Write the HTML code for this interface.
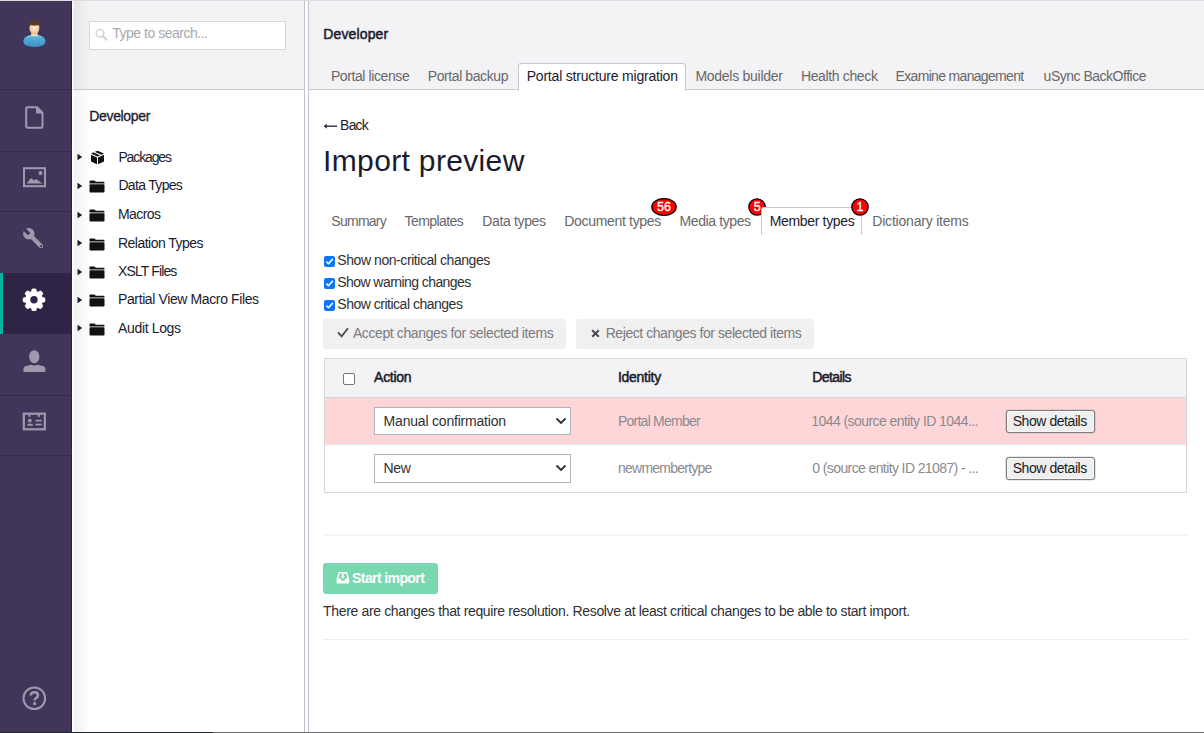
<!DOCTYPE html>
<html><head><meta charset="utf-8"><title>Import preview</title>
<style>
html,body{margin:0;padding:0;width:1204px;height:733px;overflow:hidden;background:#fff;font-family:"Liberation Sans",sans-serif}
.t{position:absolute;line-height:1;white-space:pre;font-family:"Liberation Sans",sans-serif}
</style></head><body>

<div style="position:absolute;left:0;top:0;width:1204px;height:1px;background:#dcdce0"></div>
<div style="position:absolute;left:0;top:1px;width:71px;height:732px;background:#413659"></div>
<div style="position:absolute;left:71px;top:1px;width:1px;height:732px;background:#2a2045"></div>
<div style="position:absolute;left:0;top:89px;width:71px;height:1px;background:#342a4c"></div>
<div style="position:absolute;left:0;top:151px;width:71px;height:1px;background:#342a4c"></div>
<div style="position:absolute;left:0;top:211px;width:71px;height:1px;background:#342a4c"></div>
<div style="position:absolute;left:0;top:395px;width:71px;height:1px;background:#342a4c"></div>
<div style="position:absolute;left:0;top:455px;width:71px;height:1px;background:#342a4c"></div>
<div style="position:absolute;left:0;top:273px;width:71px;height:61px;background:#2f2346"></div>
<div style="position:absolute;left:0;top:273px;width:3px;height:61px;background:#00b4a0"></div>


<!-- avatar -->
<svg style="position:absolute;left:22px;top:19px" width="26" height="30" viewBox="0 0 26 30">
 <defs>
  <radialGradient id="face" cx="50%" cy="45%" r="60%"><stop offset="0" stop-color="#fff0dc"/><stop offset="0.6" stop-color="#f6d2a8"/><stop offset="1" stop-color="#e0a874"/></radialGradient>
  <linearGradient id="body" x1="0" y1="0" x2="0" y2="1"><stop offset="0" stop-color="#9ad8f4"/><stop offset="0.25" stop-color="#55aedc"/><stop offset="1" stop-color="#3c90c6"/></linearGradient>
 </defs>
 <path d="M1.4 22.5 Q1.2 17.8 7.5 16.2 Q12.3 15.2 17.1 16.2 Q23.6 17.8 23.4 22.5 Q23.2 27.8 12.4 27.9 Q1.6 27.8 1.4 22.5Z" fill="url(#body)"/>
 <path d="M9.6 12.5 H15.2 L15.8 16.6 Q12.4 18 9 16.6Z" fill="#f7dcbc"/>
 <path d="M7.3 8.2 Q7.3 2.3 12.4 2.3 Q17.5 2.3 17.5 8.2 Q17.5 12.2 15.2 14.4 Q12.4 16.2 9.6 14.4 Q7.3 12.2 7.3 8.2Z" fill="url(#face)"/>
 <path d="M6.9 9 Q6.3 1.8 12.4 1.8 Q18.5 1.8 17.9 9 Q17.3 6.8 16.2 5.9 Q12.4 7.4 8.6 5.9 Q7.5 6.8 6.9 9Z" fill="#5e3c1f"/>
</svg>
<!-- document -->
<svg style="position:absolute;left:25px;top:106px" width="19" height="23" viewBox="0 0 19 23">
 <path d="M2.5 1.2 H12 L17.5 6.7 V20.5 Q17.5 21.8 16.2 21.8 H2.5 Q1.2 21.8 1.2 20.5 V2.5 Q1.2 1.2 2.5 1.2Z" fill="none" stroke="#a099ae" stroke-width="2"/>
 <path d="M11.5 1.5 V7 H17" fill="#a099ae" stroke="#a099ae" stroke-width="1"/>
</svg>
<!-- image -->
<svg style="position:absolute;left:23px;top:167px" width="23" height="21" viewBox="0 0 23 21">
 <rect x="1" y="1.2" width="21" height="18" fill="none" stroke="#a099ae" stroke-width="2"/>
 <path d="M3.5 16.5 L8 11 L11 13.5 L13 12 L19.5 16.5Z" fill="#a099ae"/>
 <circle cx="17.5" cy="6" r="2" fill="#a099ae"/>
</svg>
<!-- wrench -->
<svg style="position:absolute;left:22px;top:227px" width="24" height="24" viewBox="0 0 24 24">
 <defs><mask id="wm"><rect width="24" height="24" fill="#fff"/>
  <rect x="-1.7" y="-8" width="3.4" height="8.5" fill="#000" transform="translate(6.8 6.8) rotate(-45)"/>
  <circle cx="19.1" cy="19.2" r="1.1" fill="#000"/></mask></defs>
 <g mask="url(#wm)" fill="#a099ae">
  <circle cx="6.8" cy="6.8" r="5.7"/>
  <path d="M6.8 6.8 L19.1 19.2" stroke="#a099ae" stroke-width="4.3" stroke-linecap="round"/>
 </g>
</svg>
<!-- gear -->
<svg style="position:absolute;left:22px;top:288px" width="24" height="24" viewBox="0 0 24 24">
 <defs><mask id="gm"><rect width="24" height="24" fill="#fff"/><circle cx="12" cy="11.8" r="3.7" fill="#000"/></mask></defs>
 <g fill="#ffffff" mask="url(#gm)">
  <circle cx="12" cy="11.8" r="9.0"/>
  <g id="teeth">
   <rect x="9.4" y="0.5" width="5.2" height="5" rx="1.6"/>
   <rect x="9.4" y="18.1" width="5.2" height="5" rx="1.6"/>
  </g>
  <use href="#teeth" transform="rotate(45 12 11.8)"/>
  <use href="#teeth" transform="rotate(90 12 11.8)"/>
  <use href="#teeth" transform="rotate(135 12 11.8)"/>
 </g>
</svg>
<!-- member -->
<svg style="position:absolute;left:23px;top:350px" width="23" height="23" viewBox="0 0 23 23">
 <ellipse cx="11.25" cy="6.65" rx="5.15" ry="6.5" fill="#a099ae"/>
 <path d="M0.5 22 V18.2 Q0.5 16.6 3 16 L8.2 14.8 Q11.3 16.4 14.4 14.8 L19.6 16 Q22.3 16.6 22.3 18.2 V22Z" fill="#a099ae"/>
</svg>
<!-- member card -->
<svg style="position:absolute;left:22px;top:411px" width="24" height="22" viewBox="0 0 24 22">
 <rect x="1.8" y="2.7" width="21" height="15.6" fill="none" stroke="#a099ae" stroke-width="2.2"/>
 <rect x="6.5" y="3.8" width="2" height="2" fill="#a099ae"/>
 <rect x="15.6" y="3.8" width="2.4" height="2" fill="#a099ae"/>
 <circle cx="7.8" cy="9.6" r="1.9" fill="#a099ae"/>
 <path d="M4.8 14.8 Q5.2 12.4 8 12.4 Q10.8 12.4 11.4 14.8Z" fill="#a099ae"/>
 <rect x="13.4" y="8.8" width="6.4" height="1.7" fill="#a099ae"/>
 <rect x="13.4" y="12.7" width="6.4" height="1.7" fill="#a099ae"/>
</svg>
<!-- help -->
<svg style="position:absolute;left:22px;top:686px" width="25" height="25" viewBox="0 0 25 25">
 <circle cx="12.3" cy="12.3" r="10.8" fill="none" stroke="#a099ae" stroke-width="2"/>
 <path d="M8.8 9.5 Q8.8 6.2 12.4 6.2 Q16 6.2 16 9.2 Q16 11.2 13.8 12.2 Q12.6 12.8 12.6 14.5" fill="none" stroke="#a099ae" stroke-width="2.4"/>
 <rect x="11.2" y="16.2" width="2.8" height="2.8" fill="#a099ae"/>
</svg>


<div style="position:absolute;left:72px;top:1px;width:1px;height:732px;background:#ffffff"></div>
<div style="position:absolute;left:73px;top:1px;width:231px;height:88px;background:#f3f3f5"></div>
<div style="position:absolute;left:73px;top:90px;width:231px;height:643px;background:#ffffff"></div>
<div style="position:absolute;left:74px;top:1px;width:17px;height:731px;background:linear-gradient(to right, rgba(0,0,0,0.055), rgba(0,0,0,0))"></div>
<div style="position:absolute;left:73px;top:89px;width:231px;height:1px;background:#c8c6d2"></div>
<div style="position:absolute;left:304px;top:1px;width:1px;height:732px;background:#c4c2cf"></div>
<div style="position:absolute;left:305px;top:1px;width:3px;height:732px;background:#fdfdfe"></div>
<div style="position:absolute;left:308px;top:1px;width:1px;height:732px;background:#c4c2cf"></div>
<!-- search box -->
<div style="position:absolute;left:89px;top:21px;width:195px;height:27px;border:1px solid #d8d8dc;background:#fff"></div>
<svg style="position:absolute;left:95px;top:28px" width="13" height="13" viewBox="0 0 13 13">
 <circle cx="5" cy="5.2" r="3.9" fill="none" stroke="#d0d0d4" stroke-width="1.3"/>
 <path d="M7.8 8 L11.6 11.8" stroke="#d0d0d4" stroke-width="1.8" stroke-linecap="round"/>
</svg>
<svg style="position:absolute;left:77px;top:153.0px" width="6" height="8" viewBox="0 0 6 8"><path d="M0.5 0.8 L5.2 4 L0.5 7.2Z" fill="#1b1b2e"/></svg>
<svg style="position:absolute;left:90px;top:150.0px" width="15" height="15" viewBox="0 0 15 15">
 <path d="M7.5 0.8 L14 3.6 L7.5 6.4 L1 3.6Z" fill="#111"/>
 <path d="M1 4.8 L7 7.4 V14.2 L1 11.6Z" fill="#111"/>
 <path d="M14 4.8 L8 7.4 V14.2 L14 11.6Z" fill="#111"/>
 <path d="M4.2 2.3 L10.8 5.0" stroke="#fff" stroke-width="1.2"/>
</svg>
<svg style="position:absolute;left:77px;top:181.6px" width="6" height="8" viewBox="0 0 6 8"><path d="M0.5 0.8 L5.2 4 L0.5 7.2Z" fill="#1b1b2e"/></svg>
<svg style="position:absolute;left:89px;top:180px" width="16" height="13" viewBox="0 0 16 13">
 <path d="M0.5 1.5 Q0.5 0.6 1.4 0.6 H5.5 L6.8 1.8 H14.6 Q15.5 1.8 15.5 2.7 V3.4 H0.5Z" fill="#111"/>
 <rect x="0.5" y="4.2" width="15" height="8.4" rx="0.8" fill="#111"/>
</svg>
<svg style="position:absolute;left:77px;top:210.5px" width="6" height="8" viewBox="0 0 6 8"><path d="M0.5 0.8 L5.2 4 L0.5 7.2Z" fill="#1b1b2e"/></svg>
<svg style="position:absolute;left:89px;top:209px" width="16" height="13" viewBox="0 0 16 13">
 <path d="M0.5 1.5 Q0.5 0.6 1.4 0.6 H5.5 L6.8 1.8 H14.6 Q15.5 1.8 15.5 2.7 V3.4 H0.5Z" fill="#111"/>
 <rect x="0.5" y="4.2" width="15" height="8.4" rx="0.8" fill="#111"/>
</svg>
<svg style="position:absolute;left:77px;top:239.2px" width="6" height="8" viewBox="0 0 6 8"><path d="M0.5 0.8 L5.2 4 L0.5 7.2Z" fill="#1b1b2e"/></svg>
<svg style="position:absolute;left:89px;top:238px" width="16" height="13" viewBox="0 0 16 13">
 <path d="M0.5 1.5 Q0.5 0.6 1.4 0.6 H5.5 L6.8 1.8 H14.6 Q15.5 1.8 15.5 2.7 V3.4 H0.5Z" fill="#111"/>
 <rect x="0.5" y="4.2" width="15" height="8.4" rx="0.8" fill="#111"/>
</svg>
<svg style="position:absolute;left:77px;top:267.8px" width="6" height="8" viewBox="0 0 6 8"><path d="M0.5 0.8 L5.2 4 L0.5 7.2Z" fill="#1b1b2e"/></svg>
<svg style="position:absolute;left:89px;top:266px" width="16" height="13" viewBox="0 0 16 13">
 <path d="M0.5 1.5 Q0.5 0.6 1.4 0.6 H5.5 L6.8 1.8 H14.6 Q15.5 1.8 15.5 2.7 V3.4 H0.5Z" fill="#111"/>
 <rect x="0.5" y="4.2" width="15" height="8.4" rx="0.8" fill="#111"/>
</svg>
<svg style="position:absolute;left:77px;top:295.5px" width="6" height="8" viewBox="0 0 6 8"><path d="M0.5 0.8 L5.2 4 L0.5 7.2Z" fill="#1b1b2e"/></svg>
<svg style="position:absolute;left:89px;top:294px" width="16" height="13" viewBox="0 0 16 13">
 <path d="M0.5 1.5 Q0.5 0.6 1.4 0.6 H5.5 L6.8 1.8 H14.6 Q15.5 1.8 15.5 2.7 V3.4 H0.5Z" fill="#111"/>
 <rect x="0.5" y="4.2" width="15" height="8.4" rx="0.8" fill="#111"/>
</svg>
<svg style="position:absolute;left:77px;top:324.2px" width="6" height="8" viewBox="0 0 6 8"><path d="M0.5 0.8 L5.2 4 L0.5 7.2Z" fill="#1b1b2e"/></svg>
<svg style="position:absolute;left:89px;top:323px" width="16" height="13" viewBox="0 0 16 13">
 <path d="M0.5 1.5 Q0.5 0.6 1.4 0.6 H5.5 L6.8 1.8 H14.6 Q15.5 1.8 15.5 2.7 V3.4 H0.5Z" fill="#111"/>
 <rect x="0.5" y="4.2" width="15" height="8.4" rx="0.8" fill="#111"/>
</svg>


<div style="position:absolute;left:309px;top:1px;width:895px;height:88px;background:#f3f3f5"></div>
<div style="position:absolute;left:309px;top:89px;width:895px;height:1px;background:#c8c6d2"></div>
<div style="position:absolute;left:309px;top:90px;width:895px;height:642px;background:#ffffff"></div>
<!-- active tab -->
<div style="position:absolute;left:518px;top:63px;width:166px;height:27px;border:1px solid #c8c6d2;border-bottom:none;border-radius:3px 3px 0 0;background:#fff"></div>
<!-- back arrow -->
<svg style="position:absolute;left:323px;top:121px" width="15" height="10" viewBox="0 0 15 10">
 <path d="M1.5 5.2 H14" stroke="#1b1b2e" stroke-width="1.3"/>
 <path d="M0.8 5.2 L4 2.6 L3.3 5.2 L4 7.8Z" fill="#1b1b2e"/>
</svg>
<svg style="position:absolute;left:748px;top:198px" width="18" height="18" viewBox="0 0 18 18"><circle cx="9" cy="9" r="8.2" fill="#ff0000" stroke="#110000" stroke-width="1.3"/><text x="9.3" y="13.3" text-anchor="middle" font-family="Liberation Sans" font-weight="400" font-size="12.5" fill="#fff" stroke="#fff" stroke-width="0.35">5</text></svg>
<!-- subtab active -->
<div style="position:absolute;left:761px;top:207px;width:99px;height:27px;border:1px solid #c8c6d2;border-bottom:none;border-radius:3px 3px 0 0;background:#fff"></div>
<!-- checkboxes -->
<svg style="position:absolute;left:323.5px;top:256px" width="11" height="11" viewBox="0 0 11 11"><rect x="0" y="0" width="11" height="11" rx="2" fill="#0b75ff"/><path d="M2.4 5.6 L4.5 7.7 L8.8 2.9" fill="none" stroke="#fff" stroke-width="1.6"/></svg>
<svg style="position:absolute;left:323.5px;top:278px" width="11" height="11" viewBox="0 0 11 11"><rect x="0" y="0" width="11" height="11" rx="2" fill="#0b75ff"/><path d="M2.4 5.6 L4.5 7.7 L8.8 2.9" fill="none" stroke="#fff" stroke-width="1.6"/></svg>
<svg style="position:absolute;left:323.5px;top:300px" width="11" height="11" viewBox="0 0 11 11"><rect x="0" y="0" width="11" height="11" rx="2" fill="#0b75ff"/><path d="M2.4 5.6 L4.5 7.7 L8.8 2.9" fill="none" stroke="#fff" stroke-width="1.6"/></svg>

<div style="position:absolute;left:323px;top:319px;width:243px;height:30px;border-radius:3px;background:#f0f0f0"></div>
<svg style="position:absolute;left:337px;top:327px" width="12" height="11" viewBox="0 0 12 11"><path d="M1 5.4 L4.6 9.3 L11 1.2" fill="none" stroke="#4a4a4e" stroke-width="1.8"/></svg>
<div style="position:absolute;left:576px;top:319px;width:238px;height:30px;border-radius:3px;background:#f0f0f0"></div>
<svg style="position:absolute;left:591px;top:328.5px" width="9" height="9" viewBox="0 0 9 9"><path d="M1.2 1.2 L7.8 7.8 M7.8 1.2 L1.2 7.8" stroke="#4a4a4e" stroke-width="2"/></svg>
<!-- table -->
<div style="position:absolute;left:324px;top:358px;width:861px;height:133px;border:1px solid #d8d8dc;background:#fff"></div>
<div style="position:absolute;left:325px;top:359px;width:861px;height:38px;background:#f3f3f5"></div>
<div style="position:absolute;left:325px;top:397px;width:861px;height:1px;background:#d6d6da"></div>
<div style="position:absolute;left:325px;top:398px;width:861px;height:46px;background:#ffd6d8"></div>
<div style="position:absolute;left:325px;top:444px;width:861px;height:1px;background:#e6e6e8"></div>
<div style="position:absolute;left:343px;top:372.5px;width:10px;height:10px;border:1px solid #767676;border-radius:2px;background:#fff"></div>
<div style="position:absolute;left:374px;top:407px;width:195px;height:26px;border:1px solid #b2b5bd;background:#fff"></div>
<div style="position:absolute;left:374px;top:454px;width:195px;height:27px;border:1px solid #b2b5bd;background:#fff"></div>
<svg style="position:absolute;left:555px;top:417px" width="12" height="8" viewBox="0 0 12 8"><path d="M1.5 1.5 L6 6 L10.5 1.5" fill="none" stroke="#303033" stroke-width="1.8"/></svg>
<svg style="position:absolute;left:555px;top:464px" width="12" height="8" viewBox="0 0 12 8"><path d="M1.5 1.5 L6 6 L10.5 1.5" fill="none" stroke="#303033" stroke-width="1.8"/></svg>
<div style="position:absolute;left:1006px;top:410px;width:87px;height:21px;border:1px solid #7e7e7e;border-radius:3px;background:#efefef;box-shadow:inset 0 0 0 1px #f8f8f8, 0 0 0 0.6px rgba(120,120,120,0.35)"></div>
<div style="position:absolute;left:1006px;top:457px;width:87px;height:21px;border:1px solid #7e7e7e;border-radius:3px;background:#efefef;box-shadow:inset 0 0 0 1px #f8f8f8, 0 0 0 0.6px rgba(120,120,120,0.35)"></div>
<!-- hr -->
<div style="position:absolute;left:323px;top:534px;width:865px;height:2px;background:#f5f5f5"></div>
<div style="position:absolute;left:323px;top:639px;width:865px;height:1px;background:#efeff1"></div>
<!-- start import -->
<div style="position:absolute;left:323px;top:563px;width:115px;height:31px;border-radius:3px;background:#7ad8b1"></div>
<svg style="position:absolute;left:332px;top:568px" width="22" height="20" viewBox="0 0 22 20">
 <path d="M6.8 4.1 H15 L17.1 10.4 V15.4 H4.6 V10.4 Z" fill="#fff"/>
 <path d="M7.7 5.6 H14.1 L15.5 10.2 H13.5 Q12.9 12.8 10.85 12.8 Q8.8 12.8 8.2 10.2 H6.3 Z" fill="#7ad8b1"/>
 <path d="M10.1 5.4 H11.6 V8.2 H13 L10.85 10.8 L8.7 8.2 H10.1 Z" fill="#fff"/>
</svg>
<!-- bottom line -->
<div style="position:absolute;left:0;top:732px;width:213px;height:1px;background:#20272c"></div><div style="position:absolute;left:213px;top:732px;width:991px;height:1px;background:#6a6a6c"></div>


<svg style="position:absolute;left:651px;top:198px" width="26" height="18" viewBox="0 0 26 18"><ellipse cx="13" cy="9" rx="12.2" ry="8.4" fill="#ff0000" stroke="#110000" stroke-width="1.3"/><text x="13" y="13.3" text-anchor="middle" font-family="Liberation Sans" font-weight="400" font-size="12.5" fill="#fff" stroke="#fff" stroke-width="0.35">56</text></svg>

<div class="t" style="left:112.2px;top:26.0px;font-size:14px;font-weight:400;color:#a8a8b0;letter-spacing:-0.481px">Type to search...</div>
<div class="t" style="left:89.3px;top:109.0px;font-size:14px;font-weight:400;-webkit-text-stroke:0.3px #1b1b2e;color:#1b1b2e;letter-spacing:-0.350px">Developer</div>
<div class="t" style="left:118.4px;top:150.0px;font-size:14px;font-weight:400;color:#1b1b2e;letter-spacing:-1.129px">Packages</div>
<div class="t" style="left:118.4px;top:178.0px;font-size:14px;font-weight:400;color:#1b1b2e;letter-spacing:-0.678px">Data Types</div>
<div class="t" style="left:118.0px;top:207.0px;font-size:14px;font-weight:400;color:#1b1b2e;letter-spacing:-0.560px">Macros</div>
<div class="t" style="left:118.0px;top:236.0px;font-size:14px;font-weight:400;color:#1b1b2e;letter-spacing:-0.523px">Relation Types</div>
<div class="t" style="left:118.0px;top:264.0px;font-size:14px;font-weight:400;color:#1b1b2e;letter-spacing:-0.867px">XSLT Files</div>
<div class="t" style="left:118.0px;top:292.0px;font-size:14px;font-weight:400;color:#1b1b2e;letter-spacing:-0.383px">Partial View Macro Files</div>
<div class="t" style="left:118.0px;top:321.0px;font-size:14px;font-weight:400;color:#1b1b2e;letter-spacing:-0.344px">Audit Logs</div>
<div class="t" style="left:323.3px;top:27.0px;font-size:14px;font-weight:400;-webkit-text-stroke:0.5px #1b1b2e;color:#1b1b2e;letter-spacing:0.125px">Developer</div>
<div class="t" style="left:330.9px;top:69.0px;font-size:14px;font-weight:400;color:#68676b;letter-spacing:-0.400px">Portal license</div>
<div class="t" style="left:427.7px;top:69.0px;font-size:14px;font-weight:400;color:#68676b;letter-spacing:-0.400px">Portal backup</div>
<div class="t" style="left:526.7px;top:69.0px;font-size:14px;font-weight:400;color:#1b1b2e;letter-spacing:-0.204px">Portal structure migration</div>
<div class="t" style="left:695.4px;top:69.0px;font-size:14px;font-weight:400;color:#68676b;letter-spacing:-0.269px">Models builder</div>
<div class="t" style="left:800.9px;top:69.0px;font-size:14px;font-weight:400;color:#68676b;letter-spacing:-0.355px">Health check</div>
<div class="t" style="left:895.6px;top:69.0px;font-size:14px;font-weight:400;color:#68676b;letter-spacing:-0.676px">Examine management</div>
<div class="t" style="left:1043.6px;top:69.0px;font-size:14px;font-weight:400;color:#68676b;letter-spacing:-0.493px">uSync BackOffice</div>
<div class="t" style="left:340.1px;top:118.0px;font-size:14px;font-weight:400;color:#1b1b2e;letter-spacing:-0.800px">Back</div>
<div class="t" style="left:323.1px;top:146.0px;font-size:30px;font-weight:400;color:#1b1b2e;letter-spacing:0.346px">Import preview</div>
<div class="t" style="left:331.3px;top:214.0px;font-size:14px;font-weight:400;color:#68676b;letter-spacing:-0.733px">Summary</div>
<div class="t" style="left:404.6px;top:214.0px;font-size:14px;font-weight:400;color:#68676b;letter-spacing:-0.575px">Templates</div>
<div class="t" style="left:482.2px;top:214.0px;font-size:14px;font-weight:400;color:#68676b;letter-spacing:-0.344px">Data types</div>
<div class="t" style="left:564.3px;top:214.0px;font-size:14px;font-weight:400;color:#68676b;letter-spacing:-0.323px">Document types</div>
<div class="t" style="left:679.5px;top:214.0px;font-size:14px;font-weight:400;color:#68676b;letter-spacing:-0.390px">Media types</div>
<div class="t" style="left:769.8px;top:214.0px;font-size:14px;font-weight:400;color:#1b1b2e;letter-spacing:-0.345px">Member types</div>
<div class="t" style="left:872.3px;top:214.0px;font-size:14px;font-weight:400;color:#68676b;letter-spacing:-0.207px">Dictionary items</div>
<div class="t" style="left:337.3px;top:253.0px;font-size:14px;font-weight:400;color:#303033;letter-spacing:-0.433px">Show non-critical changes</div>
<div class="t" style="left:337.3px;top:275.0px;font-size:14px;font-weight:400;color:#303033;letter-spacing:-0.568px">Show warning changes</div>
<div class="t" style="left:337.3px;top:297.0px;font-size:14px;font-weight:400;color:#303033;letter-spacing:-0.490px">Show critical changes</div>
<div class="t" style="left:352.9px;top:326.0px;font-size:14px;font-weight:400;color:#7b7b80;letter-spacing:-0.388px">Accept changes for selected items</div>
<div class="t" style="left:605.7px;top:326.0px;font-size:14px;font-weight:400;color:#7b7b80;letter-spacing:-0.438px">Reject changes for selected items</div>
<div class="t" style="left:374.1px;top:370.0px;font-size:14px;font-weight:400;-webkit-text-stroke:0.5px #1b1b2e;color:#1b1b2e;letter-spacing:-0.280px">Action</div>
<div class="t" style="left:618.0px;top:370.0px;font-size:14px;font-weight:400;-webkit-text-stroke:0.5px #1b1b2e;color:#1b1b2e;letter-spacing:-0.286px">Identity</div>
<div class="t" style="left:812.3px;top:370.0px;font-size:14px;font-weight:400;-webkit-text-stroke:0.5px #1b1b2e;color:#1b1b2e;letter-spacing:-0.600px">Details</div>
<div class="t" style="left:383.6px;top:414.0px;font-size:14px;font-weight:400;color:#303033;letter-spacing:-0.200px">Manual confirmation</div>
<div class="t" style="left:383.6px;top:461.0px;font-size:14px;font-weight:400;color:#303033;letter-spacing:-0.400px">New</div>
<div class="t" style="left:618.0px;top:414.0px;font-size:14px;font-weight:400;color:#8a8a8f;letter-spacing:-0.767px">Portal Member</div>
<div class="t" style="left:618.0px;top:461.0px;font-size:14px;font-weight:400;color:#8a8a8f;letter-spacing:-0.758px">newmembertype</div>
<div class="t" style="left:811.3px;top:414.0px;font-size:14px;font-weight:400;color:#8a8a8f;letter-spacing:-0.569px">1044 (source entity ID 1044...</div>
<div class="t" style="left:812.3px;top:461.0px;font-size:14px;font-weight:400;color:#8a8a8f;letter-spacing:-0.606px">0 (source entity ID 21087) - ...</div>
<div class="t" style="left:1012.7px;top:414.0px;font-size:14px;font-weight:400;color:#1b1b1b;letter-spacing:-0.436px">Show details</div>
<div class="t" style="left:1012.7px;top:461.0px;font-size:14px;font-weight:400;color:#1b1b1b;letter-spacing:-0.436px">Show details</div>
<div class="t" style="left:352.1px;top:571.0px;font-size:14px;font-weight:700;color:#ffffff;letter-spacing:-0.600px">Start import</div>
<div class="t" style="left:323.1px;top:604.0px;font-size:14px;font-weight:400;color:#303033;letter-spacing:-0.352px">There are changes that require resolution. Resolve at least critical changes to be able to start import.</div>
<svg style="position:absolute;left:851px;top:198px" width="18" height="18" viewBox="0 0 18 18"><circle cx="9" cy="9" r="8.2" fill="#ff0000" stroke="#110000" stroke-width="1.3"/><text x="9" y="13.3" text-anchor="middle" font-family="Liberation Sans" font-weight="400" font-size="12.5" fill="#fff" stroke="#fff" stroke-width="0.35">1</text></svg>
</body></html>
